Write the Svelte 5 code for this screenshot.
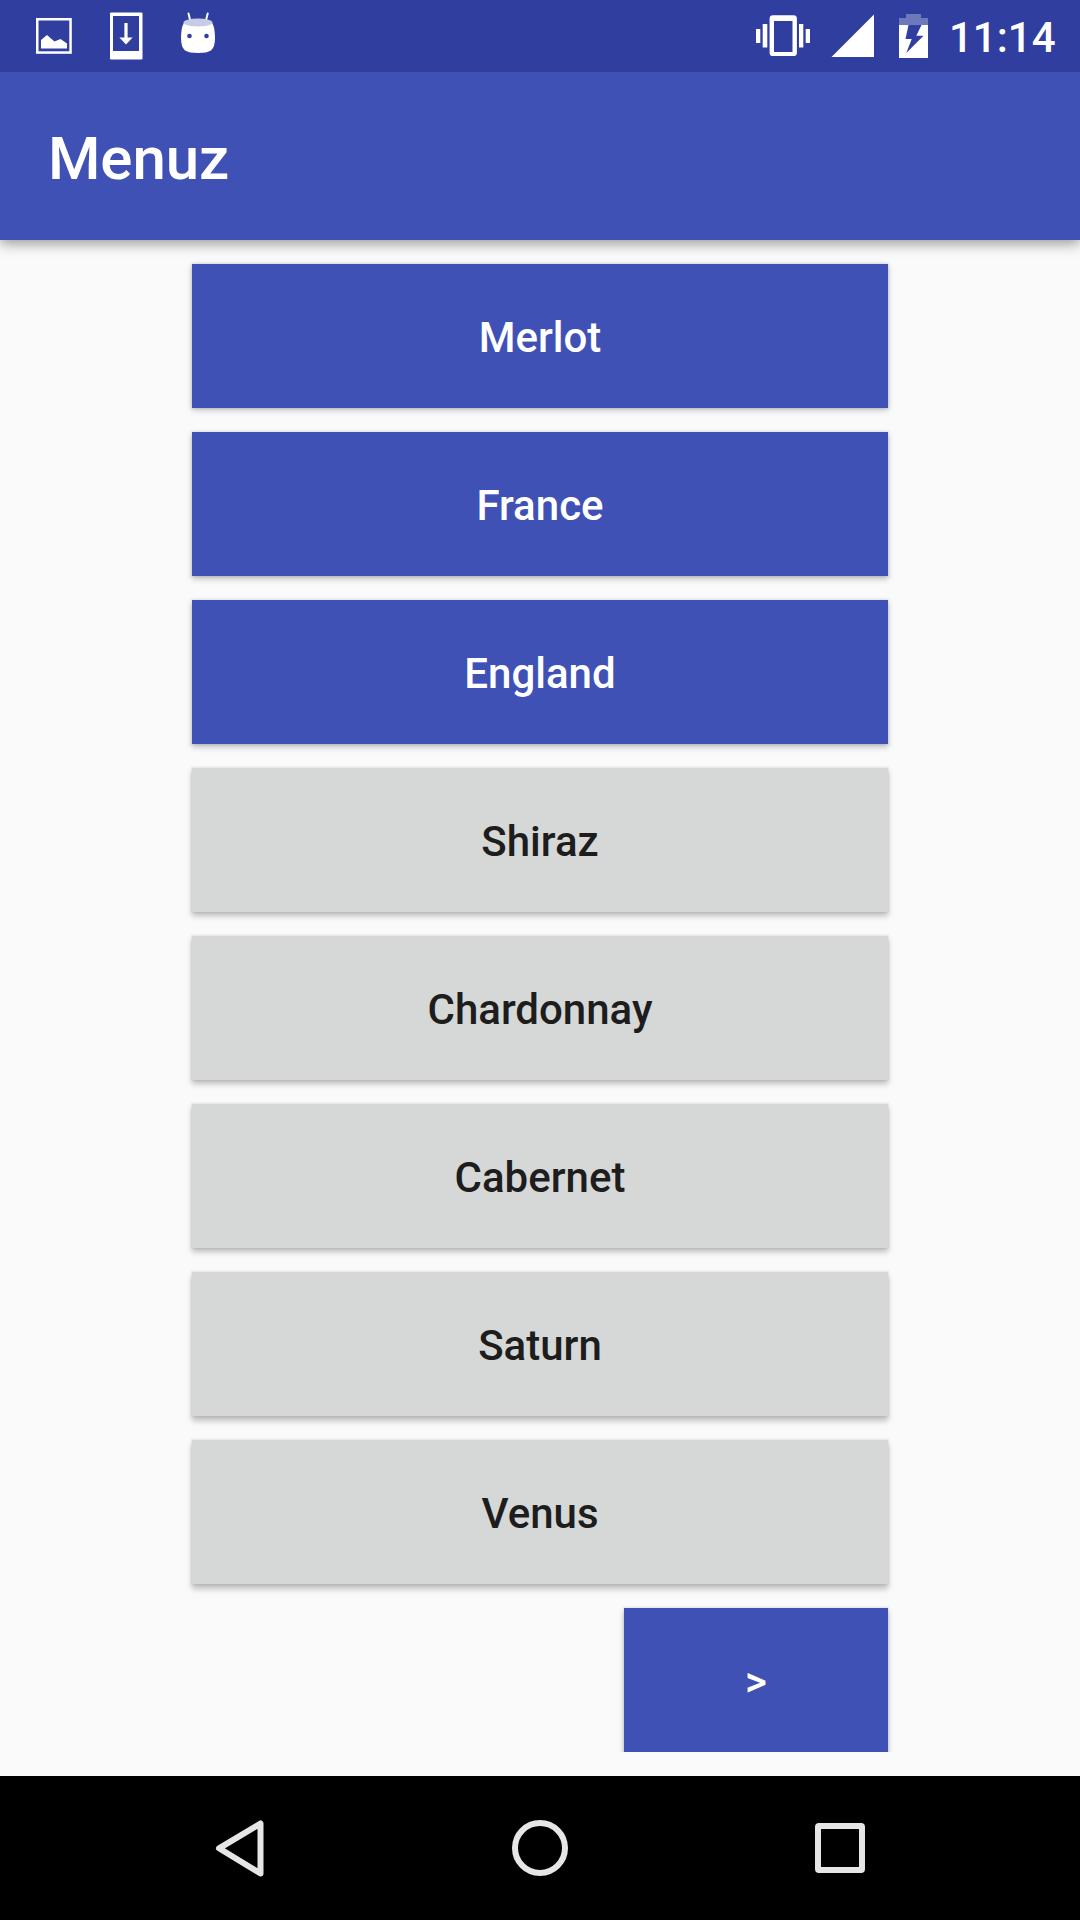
<script>
  const items = [
    { label: 'Merlot', active: true },
    { label: 'France', active: true },
    { label: 'England', active: true },
    { label: 'Shiraz', active: false },
    { label: 'Chardonnay', active: false },
    { label: 'Cabernet', active: false },
    { label: 'Saturn', active: false },
    { label: 'Venus', active: false },
  ];
  // Shadows lengthen slightly the lower an item sits on the screen.
  const drop = (i) => `${(2.4 + i * 0.4).toFixed(1)}px`;
</script>

<div class="screen">
  <header class="status">
    <svg width="260" height="72" viewBox="0 0 260 72" fill="#fff">
      <rect x="37.250" y="19.250" width="33.300" height="33.300" fill="none" stroke="#fff" stroke-width="2.500" />
      <path d="M41 48.5V40l6-5 7.500 6.500 6-2.500 6.500 4.500v5z" />
      <path fill-rule="evenodd" d="M111 12.500h30.500a1 1 0 0 1 1 1V58.500a1 1 0 0 1-1 1H111a1 1 0 0 1-1-1V13.500a1 1 0 0 1 1-1zM113 16v35h26V16z" />
      <path d="M124.400 23h3.200v14.500h5L126 44.500l-6.600-7h5z" />
      <path d="M188.500 13.500l2 8M207.700 13.500l-2 8" stroke="#fff" stroke-width="2" stroke-linecap="round" />
      <path d="M184 22.500Q181 28 181 38Q181 47 185 50.500Q189 53 198 53Q207 53 211 50.500Q215 47 215 38Q215 28 212 22.500z" />
      <ellipse cx="198" cy="22.500" rx="14.500" ry="4" fill="#c8cbe5" />
      <circle cx="189.500" cy="36" r="2.300" fill="#303f9f" />
      <circle cx="206.500" cy="36" r="2.300" fill="#303f9f" />
    </svg>
    <div class="spacer"></div>
    <svg width="200" height="72" viewBox="740 0 200 72" fill="#fff">
      <path d="M756 29h4.300v14H756zM762.700 24h4.600v23.500h-4.600zM799 24h4.300v23.500H799zM805.700 29h4.300v14h-4.300z" />
      <path fill-rule="evenodd" d="M773 15.300h20.500q3.400 0 3.400 3.400v34q0 3.400-3.400 3.400H773q-3.400 0-3.400-3.400v-34q0-3.400 3.400-3.400zM774 21v31h18.500V21z" />
      <path d="M831.500 57L874 14.500V57z" />
      <path d="M906 14h15v4h7v7h-29v-7h7z" opacity=".3" />
      <path fill-rule="evenodd" d="M899 25h29v33h-29zM908.500 25l-3 14h6.200l-5.400 14L923.500 35.700h-7.200L921.500 25z" />
    </svg>
    <span class="clock">11:14</span>
  </header>

  <div class="appbar"><h1>Menuz</h1></div>

  <main>
    {#each items as item, i}
      <button class:active={item.active} style:--drop={drop(i)}>{item.label}</button>
    {/each}
    <div class="next"><button class="active" style:--drop="4px">&gt;</button></div>
  </main>

  <nav>
    <svg width="1080" height="144" viewBox="0 0 1080 144" fill="none" stroke="#e6e6e6" stroke-width="6" stroke-linejoin="round">
      <path d="M219 72.300L260.500 47.500V97.500z" />
      <circle cx="540" cy="72" r="25" />
      <rect x="818" y="50" width="44" height="44" rx="1" />
    </svg>
  </nav>
</div>

<style>
  :global(body) { margin: 0; }
  .screen {
    width: 1080px;
    height: 1920px;
    display: flex;
    flex-direction: column;
    background: #fafafa;
    font-family: Roboto, "Liberation Sans", sans-serif;
    font-weight: 500;
    overflow: hidden;
  }
  svg { display: block; }
  .status {
    height: 72px;
    flex: none;
    display: flex;
    background: #303f9f;
    color: #fff;
  }
  .spacer { flex: 1; }
  .clock {
    flex: none;
    width: 140px;
    padding-left: 9px;
    box-sizing: border-box;
    font-size: 42px;
    line-height: 76px;
    white-space: nowrap;
  }
  .appbar {
    height: 168px;
    flex: none;
    box-sizing: border-box;
    padding-left: 48px;
    background: #3f51b5;
    color: #fff;
    box-shadow: 0 4px 12px rgba(0, 0, 0, 0.38);
    clip-path: inset(0 0 -24px 0);
  }
  h1 {
    margin: 0;
    font-size: 60px;
    font-weight: 500;
    line-height: 173px;
    letter-spacing: -0.1px;
  }
  main {
    box-sizing: border-box;
    height: 1512px;
    margin: 0 192px 24px;
    padding-top: 24px;
    flex: none;
    display: flex;
    flex-direction: column;
    gap: 24px;
    clip-path: inset(0 -20px);
  }
  button {
    height: 144px;
    width: 100%;
    flex: none;
    border: 0;
    padding: 4px 0 0;
    background: #d6d8d7;
    color: #1d1d1d;
    font: 500 42px/140px Roboto, "Liberation Sans", sans-serif;
    box-shadow: 0 0 2px 1px rgba(0, 0, 0, 0.08), 0 var(--drop) 6px rgba(0, 0, 0, 0.24);
  }
  button.active {
    background: #3f51b5;
    color: #fff;
  }
  .next {
    width: 264px;
    align-self: flex-end;
  }
  nav {
    height: 144px;
    flex: none;
    background: #000;
  }
</style>
